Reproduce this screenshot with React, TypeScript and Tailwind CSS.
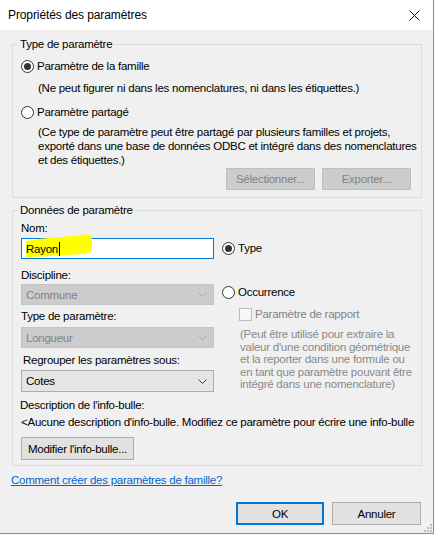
function Radio({ checked }: { checked?: boolean }) {
  return (
    <span className="flex h-[13px] w-[13px] shrink-0 items-center justify-center rounded-full border border-[#333333] bg-white">
      {checked && <span className="h-[7px] w-[7px] rounded-full bg-[#333333]" />}
    </span>
  )
}

function Chevron({ color }: { color: string }) {
  return (
    <svg width="9" height="5" viewBox="0 0 9 5" className="shrink-0">
      <path d="M0.5 0.5 L4.5 4.5 L8.5 0.5" fill="none" stroke={color} strokeWidth="1" />
    </svg>
  )
}

function Select({ value, disabled }: { value: string; disabled?: boolean }) {
  return (
    <div
      className={
        disabled
          ? 'flex h-[21px] w-[193px] items-center justify-between border border-[#c4c4c4] bg-[#cccccc] pl-[4px] pr-[6px] text-[#838383]'
          : 'flex h-[22px] w-[193px] items-center justify-between border border-[#acacac] bg-[#e5e5e5] pl-[4px] pr-[6px] text-black'
      }
    >
      <span>{value}</span>
      <Chevron color={disabled ? '#a8a8a8' : '#3c3c3c'} />
    </div>
  )
}

export default function App() {
  return (
    <div className="h-[536px] w-[436px] bg-white font-['Liberation_Sans',Arial,sans-serif] text-[11.5px] leading-[16px] tracking-[-0.25px] text-black">
      <div className="relative flex h-[534px] w-[434px] flex-col border-b border-r border-[#8a8a8a] bg-[#f0f0f0]">
        {/* title bar */}
        <div className="flex h-[30px] shrink-0 items-center justify-between bg-white pl-[8px] pr-[13px]">
          <span className="text-[12px] tracking-[-0.1px]">Propriétés des paramètres</span>
          <svg width="11" height="11" viewBox="0 0 11 11">
            <path d="M0.5 0.5 L10.5 10.5 M10.5 0.5 L0.5 10.5" stroke="#111" strokeWidth="1" />
          </svg>
        </div>

        {/* Type de paramètre */}
        <div className="relative ml-[12px] mt-[14px] h-[154px] w-[410px] border border-[#dcdcdc] pl-[8px]">
          <span className="absolute -top-[8px] left-[5px] bg-[#f0f0f0] px-[2px] leading-[15px]">Type de paramètre</span>
          <div className="mt-[13px] flex h-[16px] items-center gap-[3px]">
            <Radio checked />
            <span>Paramètre de la famille</span>
          </div>
          <div className="mt-[6px] h-[16px] whitespace-nowrap pl-[17px]">
            (Ne peut figurer ni dans les nomenclatures, ni dans les étiquettes.)
          </div>
          <div className="mt-[8px] flex h-[16px] items-center gap-[3px]">
            <Radio />
            <span>Paramètre partagé</span>
          </div>
          <div className="mt-[5px] whitespace-nowrap pl-[17px] leading-[14px]">
            (Ce type de paramètre peut être partagé par plusieurs familles et projets,
            <br />
            exporté dans une base de données ODBC et intégré dans des nomenclatures
            <br />
            et des étiquettes.)
          </div>
          <div className="mt-[1px] flex justify-end gap-[7px] pr-[10px]">
            <div className="flex h-[22px] w-[89px] items-center justify-center whitespace-nowrap border border-[#bfbfbf] bg-[#cccccc] text-[#838383]">
              Sélectionner...
            </div>
            <div className="flex h-[22px] w-[89px] items-center justify-center whitespace-nowrap border border-[#bfbfbf] bg-[#cccccc] text-[#838383]">
              Exporter...
            </div>
          </div>
        </div>

        {/* Données de paramètre */}
        <div className="relative ml-[12px] mt-[12px] h-[256px] w-[410px] border border-[#dcdcdc] pl-[8px]">
          <span className="absolute -top-[8px] left-[5px] bg-[#f0f0f0] px-[2px] leading-[15px]">Données de paramètre</span>
          <div className="flex gap-[8px]">
            <div className="flex w-[193px] flex-col">
              <div className="mt-[9px] h-[16px]">Nom:</div>
              <div className="relative mt-[2px] flex h-[21px] w-[193px] items-center border border-[#0078d7] bg-white pl-[4px]">
                <svg width="70" height="28" viewBox="0 0 70 28" className="absolute -top-[6px] left-[3px]">
                  <path
                    d="M1 8 C12 6 30 4 48 3 C56 2 62 1 66 2 L67 6 L67 17 C66 19 64 20 60 21 L40 22 C25 23 12 24 2 24 L1 20 Z"
                    fill="#ffff00"
                  />
                </svg>
                <span className="relative">Rayon</span>
                <span className="relative ml-[1px] h-[14px] w-[1px] bg-black" />
              </div>
              <div className="mt-[8px] h-[16px]">Discipline:</div>
              <div className="mt-[1px]">
                <Select value="Commune" disabled />
              </div>
              <div className="mt-[3px] h-[16px]">Type de paramètre:</div>
              <div className="mt-[3px]">
                <Select value="Longueur" disabled />
              </div>
              <div className="mt-[4px] h-[16px] pl-[2px]">Regrouper les paramètres sous:</div>
              <div className="mt-[2px]">
                <Select value="Cotes" />
              </div>
            </div>
            <div className="flex flex-col">
              <div className="mt-[29px] flex h-[16px] items-center gap-[3px]">
                <Radio checked />
                <span>Type</span>
              </div>
              <div className="mt-[28px] flex h-[16px] items-center gap-[3px]">
                <Radio />
                <span>Occurrence</span>
              </div>
              <div className="mt-[6px] flex h-[16px] items-center gap-[3px] pl-[17px] text-[#838383]">
                <span className="h-[13px] w-[13px] border border-[#bcbcbc] bg-[#f7f7f7]" />
                <span>Paramètre de rapport</span>
              </div>
              <div className="mt-[6px] whitespace-nowrap pl-[18px] leading-[12.6px] text-[#8a8a8a]">
                (Peut être utilisé pour extraire la
                <br />
                valeur d'une condition géométrique
                <br />
                et la reporter dans une formule ou
                <br />
                en tant que paramètre pouvant être
                <br />
                intégré dans une nomenclature)
              </div>
            </div>
          </div>
          <div className="-ml-[1px] mt-[5px] h-[16px]">Description de l'info-bulle:</div>
          <div className="mt-[1px] h-[16px] whitespace-nowrap">
            &lt;Aucune description d'info-bulle. Modifiez ce paramètre pour écrire une info-bulle
          </div>
          <div className="mt-[7px] flex h-[23px] w-[113px] items-center justify-center whitespace-nowrap border border-[#adadad] bg-[#e1e1e1]">
            Modifier l'info-bulle...
          </div>
        </div>

        <div className="mt-[6px] h-[16px] pl-[11px]">
          <span className="text-[#0066cc] underline">Comment créer des paramètres de famille?</span>
        </div>

        <div className="mt-[14px] flex justify-end gap-[8px] pr-[12px]">
          <div className="flex h-[23px] w-[88px] items-center justify-center border-2 border-[#0078d7] bg-[#e1e1e1]">OK</div>
          <div className="flex h-[23px] w-[89px] items-center justify-center border border-[#adadad] bg-[#e1e1e1]">Annuler</div>
        </div>

        <svg width="8" height="8" viewBox="0 0 8 8" className="absolute bottom-[1px] right-[1px]">
          <rect x="6" y="0" width="2" height="2" fill="#bcbcbc" />
          <rect x="3" y="3" width="2" height="2" fill="#bcbcbc" />
          <rect x="6" y="3" width="2" height="2" fill="#bcbcbc" />
          <rect x="0" y="6" width="2" height="2" fill="#bcbcbc" />
          <rect x="3" y="6" width="2" height="2" fill="#bcbcbc" />
          <rect x="6" y="6" width="2" height="2" fill="#bcbcbc" />
        </svg>
      </div>
    </div>
  )
}
